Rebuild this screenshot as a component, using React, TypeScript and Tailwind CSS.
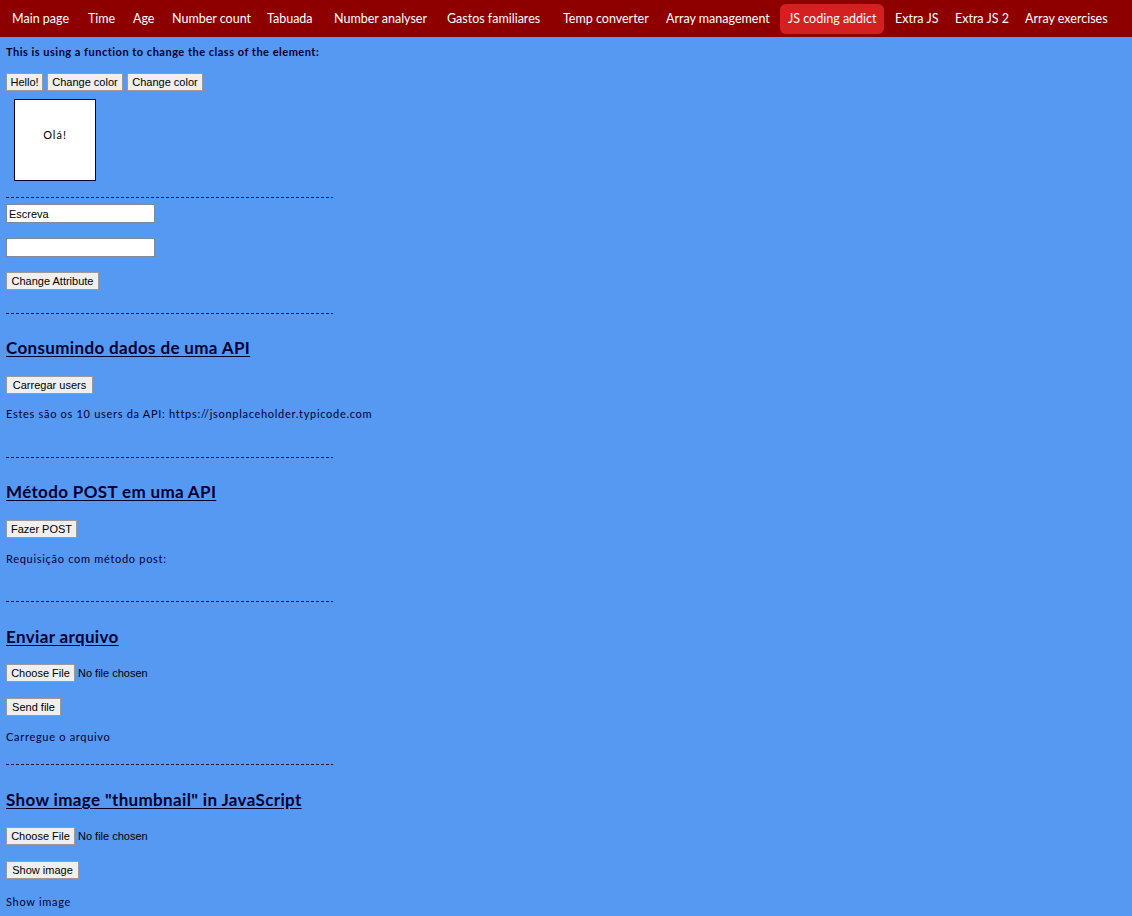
import React from "react";

const navItems = [
  { label: "Main page", w: "w-[76px]" },
  { label: "Time", w: "w-[45px]" },
  { label: "Age", w: "w-[39px]" },
  { label: "Number count", w: "w-[95px]" },
  { label: "Tabuada", w: "w-[67px]" },
  { label: "Number analyser", w: "w-[113px]" },
  { label: "Gastos familiares", w: "w-[116px]" },
  { label: "Temp converter", w: "w-[103px]" },
  { label: "Array management", w: "w-[122px]" },
  { label: "JS coding addict", w: "w-[104px] mr-[3px]", active: true },
  { label: "Extra JS", w: "w-[60px]" },
  { label: "Extra JS 2", w: "w-[70px]" },
  { label: "Array exercises", w: "w-[99px]" },
];

function Btn({ children, w, className = "" }: { children: React.ReactNode; w: string; className?: string }) {
  return (
    <button
      className={`${w} h-[18px] bg-[#efefef] border border-[#9a9a9a] text-[11px] text-black leading-none text-center font-['Liberation_Sans',Arial,sans-serif] ${className}`}
    >
      {children}
    </button>
  );
}

function Dashes({ className = "" }: { className?: string }) {
  return (
    <div
      className={`w-[327px] h-px bg-[repeating-linear-gradient(90deg,#0b1a4d_0px,#0b1a4d_3px,transparent_3px,transparent_5px)] ${className}`}
    />
  );
}

function Title({ children, className = "" }: { children: React.ReactNode; className?: string }) {
  return (
    <h2 className={`h-[22px] leading-[22px] text-[17px] font-bold tracking-[0.35px] underline underline-offset-2 ${className}`}>
      {children}
    </h2>
  );
}

function FileRow({ className = "" }: { className?: string }) {
  return (
    <div className={`flex items-center gap-[3px] ${className}`}>
      <Btn w="w-[69px]">Choose File</Btn>
      <span className="text-[11px] text-black font-['Liberation_Sans',Arial,sans-serif]">No file chosen</span>
    </div>
  );
}

function Line({ children, className = "" }: { children: React.ReactNode; className?: string }) {
  return <p className={`h-[14px] leading-[14px] text-[11px] tracking-[0.7px] ${className}`}>{children}</p>;
}

export default function App() {
  return (
    <div className="min-h-[916px] bg-[#5599f2] text-[#000033] font-['Lato','Open_Sans',sans-serif]">
      <nav className="h-[37px] bg-[#8e0000] flex items-center pl-1">
        {navItems.map((item) => (
          <a
            key={item.label}
            className={`${item.w} h-[30px] leading-[30px] pl-2 text-[12.5px] text-white whitespace-nowrap rounded-[6px] ${
              item.active ? "bg-[#d42020]" : ""
            }`}
          >
            {item.label}
          </a>
        ))}
      </nav>

      <main className="px-[6px] flex flex-col items-start pb-[14px]">
        <p className="mt-[8px] h-[14px] leading-[14px] text-[11px] font-bold tracking-[0.5px]">
          This is using a function to change the class of the element:
        </p>
        <div className="mt-[14px] flex gap-[4px]">
          <Btn w="w-[37px]">Hello!</Btn>
          <Btn w="w-[76px]">Change color</Btn>
          <Btn w="w-[76px]">Change color</Btn>
        </div>
        <div className="mt-[8px] ml-[8px] w-[82px] h-[82px] bg-white border border-[#000033] flex items-center justify-center pb-[10px] text-[11px] tracking-[1px] text-black">
          Olá!
        </div>

        <Dashes className="mt-[16px]" />
        <input
          defaultValue="Escreva"
          className="mt-[6px] w-[149px] h-[19px] bg-white border border-[#7a8aa3] px-[2px] text-[11px] text-black font-['Liberation_Sans',Arial,sans-serif] outline-none"
        />
        <input className="mt-[15px] w-[149px] h-[19px] bg-white border border-[#7a8aa3] px-[2px] text-[11px] outline-none" />
        <Btn w="w-[93px]" className="mt-[15px]">Change Attribute</Btn>
        <Dashes className="mt-[23px]" />

        <Title className="mt-[23px]">Consumindo dados de uma API</Title>
        <Btn w="w-[87px]" className="mt-[17px]">Carregar users</Btn>
        <Line className="mt-[13px]">Estes são os 10 users da API: https://jsonplaceholder.typicode.com</Line>
        <Dashes className="mt-[36px]" />

        <Title className="mt-[23px]">Método POST em uma API</Title>
        <Btn w="w-[71px]" className="mt-[17px]">Fazer POST</Btn>
        <Line className="mt-[14px]">Requisição com método post:</Line>
        <Dashes className="mt-[35px]" />

        <Title className="mt-[24px]">Enviar arquivo</Title>
        <FileRow className="mt-[16px]" />
        <Btn w="w-[55px]" className="mt-[16px]">Send file</Btn>
        <Line className="mt-[14px]">Carregue o arquivo</Line>
        <Dashes className="mt-[20px]" />

        <Title className="mt-[24px]">Show image "thumbnail" in JavaScript</Title>
        <FileRow className="mt-[16px]" />
        <Btn w="w-[73px]" className="mt-[16px]">Show image</Btn>
        <Line className="mt-[16px]">Show image</Line>
      </main>
    </div>
  );
}
